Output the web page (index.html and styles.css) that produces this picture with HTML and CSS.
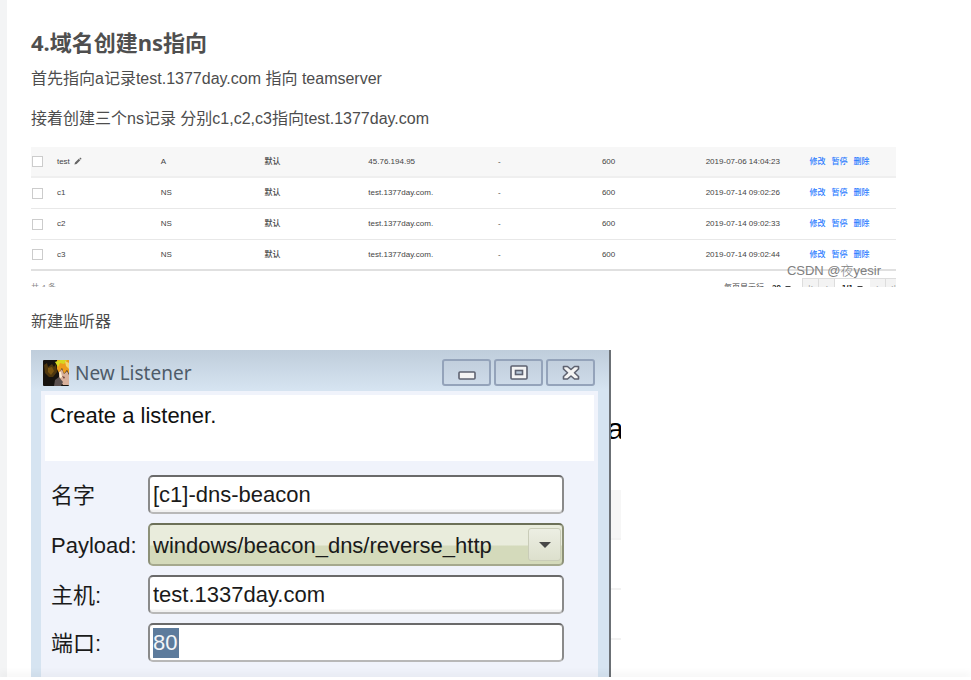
FILE: index.html
```html
<!DOCTYPE html>
<html lang="zh-CN">
<head>
<meta charset="utf-8">
<title>域名创建ns指向</title>
<link rel="stylesheet" href="styles.css">
</head>
<body>
<main class="article">
  <h2 class="heading">4.域名创建ns指向</h2>
  <p class="text">首先指向a记录test.1377day.com 指向 teamserver</p>
  <p class="text">接着创建三个ns记录 分别c1,c2,c3指向test.1377day.com</p>

  <section class="records">
    <table class="table">
      <colgroup>
        <col class="c-check"><col class="c-std"><col class="c-std"><col class="c-std"><col class="c-value"><col class="c-std"><col class="c-std"><col class="c-std"><col class="c-act">
      </colgroup>
      <tbody>
        <tr class="active">
          <td><input type="checkbox" aria-label="test"></td>
          <td>test <svg class="pencil" viewBox="0 0 8 8" aria-hidden="true"><path d="M.4 7.6 1 5.4 4.8 1.7 6.3 3.2 2.6 7z M5.3 1.2 6.2.4 7.6 1.8 6.8 2.7z"/></svg></td>
          <td>A</td><td class="cjk">默认</td><td>45.76.194.95</td><td>-</td><td>600</td><td>2019-07-06 14:04:23</td>
          <td class="acts"><a href="#">修改</a><a href="#">暂停</a><a href="#">删除</a></td>
        </tr>
        <tr>
          <td><input type="checkbox" aria-label="c1"></td>
          <td>c1</td><td>NS</td><td class="cjk">默认</td><td>test.1377day.com.</td><td>-</td><td>600</td><td>2019-07-14 09:02:26</td>
          <td class="acts"><a href="#">修改</a><a href="#">暂停</a><a href="#">删除</a></td>
        </tr>
        <tr>
          <td><input type="checkbox" aria-label="c2"></td>
          <td>c2</td><td>NS</td><td class="cjk">默认</td><td>test.1377day.com.</td><td>-</td><td>600</td><td>2019-07-14 09:02:33</td>
          <td class="acts"><a href="#">修改</a><a href="#">暂停</a><a href="#">删除</a></td>
        </tr>
        <tr>
          <td><input type="checkbox" aria-label="c3"></td>
          <td>c3</td><td>NS</td><td class="cjk">默认</td><td>test.1377day.com.</td><td>-</td><td>600</td><td>2019-07-14 09:02:44</td>
          <td class="acts"><a href="#">修改</a><a href="#">暂停</a><a href="#">删除</a></td>
        </tr>
      </tbody>
    </table>
    <div class="pager">
      <span class="total">共 4 条</span>
      <span class="per">每页显示行</span>
      <span class="size">20 <i class="caret"></i></span>
      <span class="pages">
        <button type="button" aria-label="首页">|‹</button><button type="button" aria-label="上一页">‹</button><span class="current">1/1 <i class="caret"></i></span><button type="button" aria-label="下一页">›</button><button type="button" aria-label="末页">›|</button>
      </span>
    </div>
    <span class="watermark">CSDN @夜yesir</span>
  </section>

  <p class="text">新建监听器</p>

  <div class="shot">
    <section class="dialog">
      <header class="titlebar">
        <svg class="avatar" viewBox="0 0 26 26" aria-hidden="true">
          <rect width="26" height="26" rx="1" fill="#17130f"/>
          <path d="M1 5 4 3 5 7 9 4 11 7 13 4 14 12 10 17 6 17 2 13z" fill="#4f370e"/>
          <path d="M5 8 9 7 11 11 8 15 5 12z" fill="#7a5512"/>
          <path d="M14 0H26V14L24 10 21 14 19 8 16 13 14 9z" fill="#ec9c1c"/>
          <path d="M12 2 17 0H24L21 4 17 3 15 7z" fill="#d6d820"/>
          <path d="M22 1 26 3V9L23 6z" fill="#f5d56b"/>
          <path d="M16 12 19 9 21 14 24 11 26 15V25H20L16 19z" fill="#d9b19c"/>
          <path d="M16 12 18 12 19 17 17 18z" fill="#fff0d5"/>
          <path d="M12 20 16 17 20 22 18 26H11z" fill="#5c5150"/>
          <path d="M19 16 22 17 21 19z" fill="#704438"/>
        </svg>
        <h3 class="title">New Listener</h3>
        <div class="controls">
          <button type="button" aria-label="最小化"><svg viewBox="0 0 20 16"><rect x="2" y="7" width="16" height="7" rx="1" fill="#f4f4f4" stroke="#5e6270" stroke-width="1.6"/></svg></button>
          <button type="button" aria-label="最大化"><svg viewBox="0 0 20 16"><rect x="2" y="1" width="16" height="13" rx="1" fill="#f4f4f4" stroke="#5e6270" stroke-width="1.6"/><rect x="6.5" y="5.5" width="7" height="4" fill="#b9c9da" stroke="#5e6270" stroke-width="1.6"/></svg></button>
          <button type="button" aria-label="关闭"><svg viewBox="0 0 20 16"><path d="M2.5 1.5H6.5L10 4.5 13.5 1.5H17.500V4L13.5 7.750 17.5 11.5V14H13.5L10 11 6.5 14H2.5V11.5L6.5 7.750 2.5 4z" fill="#f4f4f4" stroke="#5e6270" stroke-width="1.6" stroke-linejoin="round"/></svg></button>
        </div>
      </header>
      <div class="body">
        <p class="intro">Create a listener.</p>
        <form class="form">
          <label for="name">名字</label>
          <input id="name" type="text" value="[c1]-dns-beacon">
          <label for="payload">Payload:</label>
          <div class="select">
            <select id="payload"><option>windows/beacon_dns/reverse_http</option></select>
            <span class="arrow"><svg viewBox="0 0 14 8" aria-hidden="true"><path d="M1 1H13L7 7z" fill="#484848"/></svg></span>
          </div>
          <label for="host">主机:</label>
          <input id="host" type="text" value="test.1337day.com">
          <label for="port">端口:</label>
          <input id="port" class="port" type="text" value="80">
        </form>
      </div>
    </section>
    <div class="behind" aria-hidden="true">
      <span class="letter">a</span>
      <div class="strip head"></div>
      <div class="strip"></div>
      <div class="strip"></div>
    </div>
  </div>
</main>
<footer class="toolbar"></footer>
</body>
</html>
```
FILE: styles.css
```css
* { box-sizing: border-box; }

body {
  margin: 0;
  height: 100vh;
  display: flex;
  flex-direction: column;
  overflow: hidden;
  background: #fff;
  color: #4d4d4d;
  font-family: "Liberation Sans", "Noto Sans CJK SC", sans-serif;
}

.article {
  flex: 1;
  min-height: 0;
  overflow: hidden;
  border-left: 7px solid #f3f4f5;
  padding: 27px 24px 0;
}

.heading {
  margin: 0 0 10px;
  font: bold 22px/30px "Noto Sans", "Noto Sans CJK SC", sans-serif;
  color: #4f4f4f;
}

.text {
  margin: 0 0 16px;
  font-size: 16px;
  line-height: 24px;
}

.records {
  position: relative;
  max-width: 865px;
  height: 140px;
  margin: 16px 0 23px;
  overflow: hidden;
  font-size: 8px;
  line-height: 12px;
  color: #444;
}

.table {
  width: 100%;
  table-layout: fixed;
  border-collapse: separate;
  border-spacing: 0;
}
.c-check { width: 3%; }
.c-std { width: 12%; }
.c-value { width: 15%; }
.c-act { width: 10%; }

.table td {
  height: 31px;
  padding: 0;
  border-bottom: 1px solid #e8e8e8;
  white-space: nowrap;
}
.table .active td { background: #f7f7f7; border-bottom: 2px solid #efefef; }
.table tr:last-child td { border-bottom: 2px solid #e0e0e0; }
.table .cjk { font-weight: 500; }

.table input {
  appearance: none;
  display: block;
  width: 11px;
  height: 11px;
  margin: 0 0 0 1px;
  border: 1px solid #ccc;
  background: #fff;
}

.pencil { width: 8px; height: 8px; margin-left: 2px; vertical-align: middle; fill: #666; }

.acts a {
  margin-right: 6px;
  color: #2b7bff;
  font-weight: 500;
  text-decoration: none;
}

.pager {
  display: flex;
  align-items: flex-start;
  margin-right: -7px;
  padding-top: 7px;
  line-height: 20px;
}
.total { flex: 1; color: #888; }
.per { margin-right: 8px; }
.size { width: 30px; font-weight: bold; color: #222; }
.caret {
  display: inline-block;
  margin-left: 2px;
  border: 3px solid transparent;
  border-top-color: #444;
  border-bottom: 0;
  vertical-align: middle;
}
.pages { display: flex; border: 1px solid #ddd; line-height: 18px; }
.pages button {
  width: 16px;
  padding: 0;
  border: 0;
  border-right: 1px solid #ddd;
  background: #f3f3f3;
  color: #999;
  font: 8px/18px "Liberation Sans", sans-serif;
}
.current { width: 35px; color: #111; font-weight: bold; text-align: center; }

.watermark {
  position: absolute;
  right: 15px;
  bottom: 7px;
  font-size: 13px;
  line-height: 18px;
  font-weight: 300;
  color: #808080;
}

.shot { display: flex; max-width: 590px; }

.dialog {
  flex: 1;
  height: 400px;
  padding: 0 11px 0 10px;
  border-right: 2px solid #6b7075;
  background: linear-gradient(#bfcddb, #d6e4f1 40px);
}

.titlebar {
  display: flex;
  align-items: center;
  height: 41px;
  padding: 4px 3px 0 2px;
}
.avatar { width: 26px; height: 26px; margin-right: 6px; }
.title {
  flex: 1;
  margin: 0;
  font: 19px/26px "Noto Sans", sans-serif;
  color: #4e5b69;
}
.controls { display: flex; gap: 3px; }
.controls button {
  display: grid;
  place-items: center;
  width: 49px;
  height: 27px;
  padding: 0;
  border: 2px solid #94a3ba;
  border-radius: 3px;
  background: linear-gradient(#c2cfdd, #cddae8);
}
.controls svg { width: 20px; height: 16px; }

.body {
  height: 360px;
  padding: 4px;
  background: #f0f3fb;
}
.intro {
  height: 66px;
  margin: 0;
  padding: 8px 5px;
  background: #fff;
  color: #111;
  font-size: 22px;
  line-height: 26px;
}

.form {
  display: grid;
  grid-template-columns: 97px 1fr;
  align-items: center;
  row-gap: 9px;
  padding: 14px 30px 0 6px;
  font-size: 22px;
  line-height: 32px;
  color: #1a1a1a;
}
.form label { padding-top: 2px; }
.form input,
.form select {
  appearance: none;
  display: block;
  width: 100%;
  height: 39px;
  padding: 1px 3px 0;
  border: 2px solid #8a8a8a;
  border-top-color: #6a6a6a;
  border-bottom-color: #b8b8b8;
  border-radius: 5px;
  background: linear-gradient(#fff 32px, #f2f2f2 33px);
  color: #1a1a1a;
  font: 22px "Liberation Sans", sans-serif;
}
.select { position: relative; }
.form select {
  height: 43px;
  border-color: #6c7058 #8d9178 #a5a98e;
  background: linear-gradient(#e9ecdc 20px, #d4dabb 21px);
}
.arrow {
  position: absolute;
  top: 5px;
  right: 3px;
  display: grid;
  place-items: center;
  width: 33px;
  height: 33px;
  border: 1px solid #c9ccb8;
  border-radius: 3px;
  background: linear-gradient(#eceee3, #dde0cd);
  pointer-events: none;
}
.arrow svg { width: 14px; height: 8px; }
.form .port {
  color: #f2f5f8;
  background: linear-gradient(#5d7b9c, #5d7b9c) 3px 3px / 26px 30px no-repeat, #fff;
}

.behind {
  width: 10px;
  overflow: hidden;
  padding-top: 62px;
}
.letter {
  display: block;
  height: 34px;
  margin: 0 0 44px -4px;
  color: #000;
  font-size: 30px;
  line-height: 34px;
}
.strip { height: 50px; border-bottom: 2px solid #f2f2f2; }
.strip.head { background: #f6f6f6; }

.toolbar {
  position: relative;
  height: 3px;
  background: #fff;
  box-shadow: 0 -2px 8px rgba(0, 0, 0, 0.1);
}
```
